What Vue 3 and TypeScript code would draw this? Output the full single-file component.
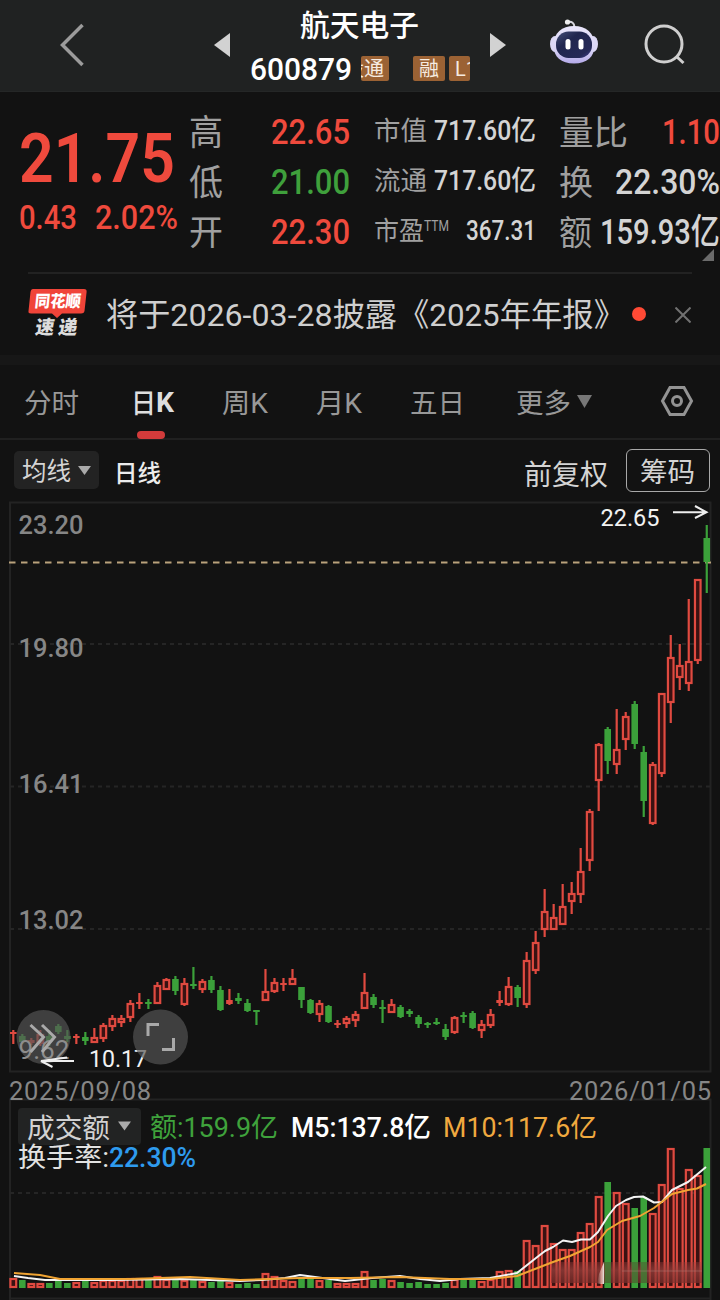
<script setup lang="ts">
import { h } from 'vue'

interface FitProps { t: string; w: number; s: number; h: number; b: number; wt?: number }

/* Single line of text fitted to a fixed advance width, on baseline b. */
const Fit = (p: FitProps) =>
  h('svg', { width: p.w, height: p.h, style: 'display:block;overflow:visible;flex:none' }, [
    h('text', {
      x: 0, y: p.b, 'font-size': p.s, 'font-weight': p.wt ?? 400,
      textLength: p.w, lengthAdjust: 'spacingAndGlyphs', fill: 'currentColor',
    }, p.t),
  ])
Fit.props = ['t', 'w', 's', 'h', 'b', 'wt']

const STEP = 9.006
const xAt = (i: number) => +(13.3 + STEP * i).toFixed(2)

/* direction, high, body top, body bottom, low, turnover bar top */
type Row = [string, number, number, number, number, number]
const rows: Row[] = [
  ['r', 1030, 1032, 1034, 1044, 1278], ['g', 1034, 1036, 1042, 1044, 1280], ['r', 1038, 1040, 1043, 1045, 1283],
  ['r', 1030, 1034, 1044, 1046, 1283], ['g', 1030, 1036, 1042, 1046, 1283], ['g', 1024, 1026, 1032, 1034, 1280],
  ['g', 1030, 1036, 1039, 1042, 1283], ['r', 1034, 1036, 1038, 1044, 1282], ['g', 1032, 1037, 1041, 1045, 1280],
  ['r', 1028, 1037, 1043, 1043, 1282], ['r', 1023, 1025, 1039, 1042, 1280], ['r', 1015, 1018, 1027, 1031, 1280],
  ['r', 1015, 1018, 1023, 1027, 1280], ['r', 1000, 1003, 1018, 1022, 1278], ['r', 993, 1002, 1004, 1009, 1278],
  ['g', 999, 1002, 1004, 1009, 1280], ['r', 982, 985, 1004, 1004, 1276], ['r', 978, 979, 990, 990, 1279],
  ['g', 976, 979, 991, 995, 1279], ['r', 978, 983, 1005, 1006, 1280], ['g', 967, 984, 986, 989, 1279],
  ['r', 979, 981, 990, 993, 1281], ['g', 976, 980, 990, 993, 1282], ['g', 986, 990, 1010, 1011, 1280],
  ['r', 989, 1000, 1004, 1005, 1282], ['g', 993, 998, 1001, 1004, 1284], ['g', 999, 1003, 1011, 1012, 1283],
  ['g', 1010, 1010, 1012, 1025, 1284], ['r', 969, 991, 1001, 1001, 1273], ['r', 978, 982, 992, 993, 1276],
  ['r', 978, 983, 985, 991, 1280], ['r', 969, 978, 985, 985, 1281], ['g', 987, 987, 1000, 1008, 1278],
  ['g', 999, 1000, 1013, 1014, 1279], ['r', 1000, 1003, 1015, 1022, 1280], ['g', 1005, 1006, 1022, 1023, 1280],
  ['r', 1020, 1023, 1025, 1028, 1283], ['r', 1016, 1018, 1024, 1028, 1283], ['r', 1011, 1014, 1021, 1027, 1283],
  ['r', 973, 992, 1009, 1009, 1271], ['g', 994, 997, 1005, 1008, 1280], ['g', 1000, 1007, 1009, 1023, 1279],
  ['r', 999, 1004, 1013, 1013, 1280], ['g', 1005, 1007, 1017, 1018, 1282], ['g', 1009, 1011, 1014, 1017, 1283],
  ['g', 1015, 1017, 1024, 1028, 1282], ['g', 1022, 1023, 1025, 1028, 1284], ['g', 1018, 1022, 1024, 1025, 1284],
  ['g', 1024, 1029, 1037, 1040, 1283], ['r', 1016, 1017, 1033, 1034, 1279], ['g', 1012, 1015, 1017, 1023, 1280],
  ['g', 1011, 1013, 1028, 1029, 1280], ['r', 1020, 1024, 1031, 1038, 1281], ['r', 1009, 1014, 1026, 1028, 1279],
  ['r', 991, 1000, 1003, 1006, 1271], ['r', 977, 986, 1005, 1006, 1270], ['g', 985, 987, 998, 1007, 1271],
  ['r', 952, 960, 1005, 1008, 1240], ['r', 931, 942, 971, 974, 1245], ['r', 889, 911, 930, 937, 1225],
  ['r', 904, 917, 930, 930, 1243], ['r', 884, 906, 925, 925, 1249], ['r', 882, 893, 902, 914, 1249],
  ['r', 848, 871, 895, 903, 1232], ['r', 809, 811, 861, 871, 1223], ['r', 743, 744, 781, 811, 1196],
  ['g', 727, 729, 761, 774, 1182], ['r', 709, 749, 765, 774, 1192], ['r', 712, 716, 740, 750, 1203],
  ['g', 701, 704, 744, 749, 1208], ['g', 746, 752, 801, 817, 1197], ['r', 762, 764, 824, 825, 1213],
  ['r', 693, 693, 774, 777, 1184], ['r', 635, 657, 703, 723, 1148], ['r', 644, 665, 678, 690, 1188],
  ['r', 599, 661, 684, 691, 1169], ['r', 579, 579, 661, 664, 1175], ['g', 525, 538, 562, 593, 1148],
]
const candles = rows.map(([c, hi, top, bot, lo, vol], i) => {
  const x = xAt(i)
  const hollow = c === 'r' && bot - top > 4
  return { x, hollow, cls: c === 'r' ? 'up' : 'down', red: c === 'r', hi, top, bot, lo, vol }
})

const ma5 = '14,1276 28,1278 45,1280 110,1280 180,1279 240,1281 262,1280 285,1278 300,1275 330,1279 345,1281 372,1278 400,1276 420,1279 440,1281 460,1279 490,1278 517,1273 536,1258 545,1251 553,1247 563,1240.5 572,1242 581,1239.5 590,1239.5 598,1232 608,1216 616,1206 626,1200 634,1197 643,1196.500 654,1202.5 662,1202 672,1190 688,1182 706,1167'
const ma10 = '14,1273 40,1275 60,1279 130,1279 190,1277 240,1280 300,1278 350,1278 400,1277 450,1279 490,1279 517,1276 535,1269 553,1262 570,1256 590,1247 598,1242 607,1230 622,1221 640,1216 654,1208 672,1194 688,1190 697,1188.500 706,1184'

const axis = [
  { t: '23.20', y: 534, w: 65 }, { t: '19.80', y: 657, w: 65 }, { t: '16.41', y: 793, w: 65 },
  { t: '13.02', y: 929, w: 65 },
]
const ohlc = [
  { k: '高', v: '22.65', c: 'red' }, { k: '低', v: '21.00', c: 'green' }, { k: '开', v: '22.30', c: 'red' },
]
const caps = [
  { k: '市值', v: '717.60亿', w: 102 }, { k: '流通', v: '717.60亿', w: 102 }, { k: '市盈', sup: 'TTM', v: '367.31', w: 70 },
]
const flows = [
  { k: '量比', kw: 69, v: '1.10', w: 58, c: 'red' }, { k: '换', kw: 34, v: '22.30%', w: 105, c: '' },
  { k: '额', kw: 33, v: '159.93亿', w: 120, c: '' },
]
</script>

<template>
  <div class="app">
    <header class="top">
      <svg class="back" width="24" height="44" viewBox="0 0 24 44"><path d="M22.500 2 2.500 22 22.500 42" /></svg>
      <svg class="tri prev" width="17" height="24" viewBox="0 0 17 24"><path d="M16 0V24L0 12Z" /></svg>
      <div class="stock">
        <Fit class="name" t="航天电子" :w="119" :s="30" :h="46" :b="36" :wt="500" />
        <div class="code">
          <Fit t="600879" :w="102" :s="31" :h="46" :b="34" :wt="500" />
          <div class="tags">
            <span class="tag cut"><Fit t="股通" :w="40" :s="20" :h="25" :b="20" /></span>
            <span class="tag mid"><Fit t="融" :w="20" :s="20" :h="25" :b="20" /></span>
            <span class="tag last"><Fit t="L1" :w="22" :s="20" :h="25" :b="20" /></span>
          </div>
        </div>
      </div>
      <svg class="tri next" width="17" height="24" viewBox="0 0 17 24"><path d="M0 0V24L16 12Z" /></svg>
      <svg class="robot" width="50" height="46" viewBox="0 0 50 46">
        <defs>
          <linearGradient id="shell" x1="0" y1="0" x2="0" y2="1"><stop offset="0" stop-color="#e9e6fb" /><stop offset=".65" stop-color="#d8d3f6" /><stop offset="1" stop-color="#b3a9e8" /></linearGradient>
          <linearGradient id="visor" x1="0" y1="0" x2="1" y2="1"><stop offset="0" stop-color="#46507a" /><stop offset=".35" stop-color="#20264f" /><stop offset=".8" stop-color="#252957" /><stop offset="1" stop-color="#46449a" /></linearGradient>
        </defs>
        <path d="M18 4Q24 3 24.500 9" fill="none" stroke="#d6d6de" stroke-width="2" />
        <circle cx="17.500" cy="4" r="2.600" fill="#eee" />
        <ellipse cx="5" cy="26" rx="5" ry="8" fill="#dcd8f6" />
        <ellipse cx="43" cy="26" rx="5" ry="8" fill="#dcd8f6" />
        <path d="M24 8C36 8 44.500 15 44.500 27 44.500 39 37 45.500 24 45.500S3.500 39 3.500 27C3.500 15 12 8 24 8Z" fill="url(#shell)" />
        <rect x="6" y="13.500" width="36" height="26.500" rx="12.500" fill="url(#visor)" />
        <rect x="15.500" y="21" width="5" height="10.500" rx="2.500" fill="#fff" />
        <rect x="28.500" y="21" width="5" height="10.500" rx="2.500" fill="#fff" />
      </svg>
      <svg class="search" width="42" height="42" viewBox="0 0 42 42"><circle cx="20" cy="20" r="18" /><path d="M32.500 32.500 39.500 39" /></svg>
    </header>

    <section class="quote">
      <div class="price">
        <Fit class="red" t="21.75" :w="156" :s="69" :h="98" :b="90" :wt="600" />
        <div class="chg red">
          <Fit t="0.43" :w="58" :s="33" :h="50" :b="39" :wt="500" />
          <Fit t="2.02%" :w="83" :s="33" :h="50" :b="39" :wt="500" />
        </div>
      </div>
      <div class="col c2">
        <div v-for="r in ohlc" :key="r.k" class="cell">
          <Fit class="lab" :t="r.k" :w="34" :s="35" :h="50" :b="39" />
          <Fit :class="r.c" :t="r.v" :w="79" :s="35" :h="50" :b="38" :wt="500" />
        </div>
      </div>
      <div class="col c3">
        <div v-for="r in caps" :key="r.k" class="cell">
          <span class="labs">
            <Fit class="lab" :t="r.k" :w="r.sup ? 50 : 53" :s="26" :h="50" :b="34" />
            <Fit v-if="r.sup" class="lab" :t="r.sup" :w="25" :s="14.500" :h="50" :b="25" />
          </span>
          <Fit :t="r.v" :w="r.w" :s="27" :h="50" :b="34" :wt="500" />
        </div>
      </div>
      <div class="col c4">
        <div v-for="r in flows" :key="r.k" class="cell">
          <Fit class="lab" :t="r.k" :w="r.kw" :s="34" :h="50" :b="39" />
          <Fit :class="r.c" :t="r.v" :w="r.w" :s="35" :h="50" :b="38" :wt="500" />
        </div>
      </div>
      <svg class="corner" width="12" height="12" viewBox="0 0 12 12"><path d="M12 0V12H0Z" /></svg>
    </section>

    <section class="news">
      <svg class="logo" width="60" height="52" viewBox="0 0 60 52">
        <path d="M5 2H56Q59 2 58.600 5L56.500 24Q56 26.500 53 26.500H34L29 31 24 26.500H3Q0 26.500 .5 24L2.500 5Q3 2 5 2Z" fill="#f04439" />
        <text x="8.500" y="20.500" font-size="16.500" font-weight="900" fill="#fff" textLength="46" lengthAdjust="spacingAndGlyphs" transform="skewX(-6)">同花顺</text>
        <text x="14" y="47" font-size="19" font-weight="900" fill="#ddd" textLength="19" lengthAdjust="spacingAndGlyphs" transform="skewX(-9)">速</text>
        <text x="37" y="47" font-size="19" font-weight="900" fill="#ddd" textLength="19" lengthAdjust="spacingAndGlyphs" transform="skewX(-9)">递</text>
      </svg>
      <Fit class="headline" t="将于2026-03-28披露" :w="291" :s="32" :h="80" :b="52" />
      <Fit class="title" t="《2025年年报》" :w="227" :s="32" :h="80" :b="52" />
      <i class="dot"></i>
      <svg class="close" width="16" height="16" viewBox="0 0 16 16"><path d="M.5.5 15.500 15.500M15.500.5.5 15.500" /></svg>
    </section>

    <nav class="tabs">
      <Fit class="t1" t="分时" :w="55" :s="27" :h="73" :b="48" />
      <span class="t2 on"><Fit t="日" :w="25" :s="27" :h="73" :b="48" :wt="500" /><Fit t="K" :w="18" :s="27" :h="73" :b="47" :wt="700" /></span>
      <Fit class="t3" t="周K" :w="46" :s="27" :h="73" :b="48" />
      <Fit class="t4" t="月K" :w="46" :s="27" :h="73" :b="48" />
      <Fit class="t5" t="五日" :w="55" :s="27" :h="73" :b="48" />
      <Fit class="t6" t="更多" :w="55" :s="27" :h="73" :b="48" />
      <svg class="t7" width="15" height="13" viewBox="0 0 15 13"><path d="M0 0H15L7.500 13Z" fill="#777" /></svg>
      <svg class="t8" width="34" height="32" viewBox="0 0 34 32"><path d="M10 2.500H24L31.500 16 24 29.500H10L2.500 16Z" /><circle cx="17" cy="16" r="4.500" /></svg>
    </nav>

    <div class="bar">
      <span class="pick">
        <Fit t="均线" :w="49" :s="24.500" :h="38" :b="29" />
        <svg width="13" height="9" viewBox="0 0 13 9"><path d="M0 0H13L6.500 9Z" fill="#aaa" /></svg>
      </span>
      <Fit class="daily" t="日线" :w="47" :s="24" :h="38" :b="30" :wt="500" />
      <Fit class="adj" t="前复权" :w="84" :s="28" :h="38" :b="33" />
      <span class="chips"><Fit t="筹码" :w="55" :s="27.500" :h="40" :b="32" /></span>
    </div>

    <svg class="chart" width="720" height="803" viewBox="0 497 720 803">
      <defs>
        <linearGradient id="smear" x1="0" y1="0" x2="0" y2="1">
          <stop offset="0" stop-color="#a33f3c" stop-opacity=".35" /><stop offset=".4" stop-color="#9a403c" stop-opacity=".75" /><stop offset="1" stop-color="#7c2f2c" stop-opacity=".7" />
        </linearGradient>
        <linearGradient id="streak" x1="0" y1="0" x2="1" y2="0">
          <stop offset="0" stop-color="#e9c9c0" stop-opacity="0" /><stop offset=".8" stop-color="#ecd6cd" stop-opacity=".8" /><stop offset="1" stop-color="#fff" stop-opacity=".9" />
        </linearGradient>
      </defs>
      <g class="frame">
        <path d="M10 1071.500V502.500H710.500V1071.500Z" />
        <path d="M10 1300V1099.500H710.500V1300M10 1298.500H710.500" />
      </g>
      <path class="dash" d="M10 644H710M10 786.500H710M10 929H710M10 1193H710" />
      <g class="lab2">
        <text v-for="a in axis" :key="a.t" x="18.500" :y="a.y" font-size="25" :textLength="a.w" lengthAdjust="spacingAndGlyphs" font-weight="500">{{ a.t }}</text>
        <text x="9" y="1100" font-size="25.500" textLength="142" lengthAdjust="spacing">2025/09/08</text>
        <text x="569" y="1100" font-size="25.500" textLength="142" lengthAdjust="spacing">2026/01/05</text>
      </g>
      <path class="last" d="M9 562.500H711" />
      <g v-for="(c, i) in candles" :key="i" :class="c.cls">
        <template v-if="c.hollow">
          <path :d="`M${c.x} ${c.hi}V${c.top}M${c.x} ${c.bot}V${c.lo}`" class="wick" />
          <rect :x="c.x - 2.800" :y="c.top + 1" width="5.600" :height="c.bot - c.top - 2" class="hollow" />
        </template>
        <template v-else>
          <path :d="`M${c.x} ${c.hi}V${c.lo}`" class="wick" />
          <rect :x="c.x - 3.300" :y="c.top" width="6.600" :height="c.bot - c.top" class="solid" />
        </template>
        <rect v-if="c.red" :x="c.x - 2.900" :y="c.vol + 1" width="5.800" :height="1286 - c.vol" class="hollow" />
        <rect v-else :x="c.x - 3.300" :y="c.vol" width="6.600" :height="1288 - c.vol" class="solid" />
      </g>
      <rect x="551" y="1262" width="151" height="21" fill="url(#smear)" />
      <path d="M607.800 1262V1283M634.900 1262V1283M643.900 1262V1283" stroke="#3b7a33" stroke-width="6" opacity=".75" />
      <path d="M622 1271H702" stroke="#b98a84" opacity=".4" />
      <path d="M597 1284 599 1274 604 1262V1284Z" fill="url(#streak)" />
      <polyline class="ma" stroke="#f4f4f4" :points="ma5" />
      <polyline class="ma" stroke="#f0a433" :points="ma10" />

      <circle cx="43.500" cy="1037" r="27" class="pad" />
      <text x="89" y="1067" font-size="23" textLength="58" lengthAdjust="spacingAndGlyphs" fill="#f2f2f2">10.17</text>
      <circle cx="160.500" cy="1037" r="27.500" class="pad" />
      <text x="18.500" y="1059" font-size="25" textLength="51" lengthAdjust="spacingAndGlyphs" fill="#8d8d8d">9.62</text>
      <path class="glyph" d="M30.500 1025 43.500 1037 30.500 1052M42 1025 54.500 1037 42 1052" />
      <path class="glyph" d="M148 1036V1024.500H159M162 1049.500H173.500V1038" />
      <text x="600.500" y="526" font-size="23" textLength="59" lengthAdjust="spacingAndGlyphs" fill="#f2f2f2">22.65</text>
      <path class="arrow" d="M673 512.300H706M695 506 706.500 512.300 695 518" />
      <path class="arrow" d="M74 1061H41L52.500 1067M41 1061 67 1057.500" stroke="#bbb" />

      <rect x="18" y="1108" width="123" height="37" rx="4" fill="#222323" />
      <g class="legend">
        <text x="27" y="1138" textLength="83" lengthAdjust="spacingAndGlyphs" fill="#d2d2d2">成交额</text>
        <path d="M118 1121.500H131L124.500 1130.500Z" fill="#aaa" />
        <text x="150" y="1137" textLength="128" lengthAdjust="spacingAndGlyphs" fill="#3fa23c">额:159.9亿</text>
        <text x="291" y="1137" textLength="140" lengthAdjust="spacingAndGlyphs" fill="#fff" font-weight="500">M5:137.8亿</text>
        <text x="443" y="1137" textLength="154" lengthAdjust="spacingAndGlyphs" fill="#f0a93f">M10:117.6亿</text>
        <text x="18" y="1167" textLength="91" lengthAdjust="spacingAndGlyphs" fill="#e2e2e2">换手率:</text>
        <text x="109" y="1167" textLength="87" lengthAdjust="spacingAndGlyphs" fill="#2e9bee" font-weight="500">22.30%</text>
      </g>
    </svg>
  </div>
</template>

<style>
body { background: #121212; }
</style>

<style scoped>
.app { width: 720px; height: 1300px; overflow: hidden; background: #121212; color: #d4d4d4; font-family: Roboto, "Noto Sans CJK SC", sans-serif; }
.red { color: #ef4a3d; }
.green { color: #3fa03c; }
.lab { color: #a0a0a0; }

.top { box-sizing: border-box; display: flex; align-items: flex-start; height: 92px; background: #202222; border-bottom: 1px solid #252727; }
.back { margin: 23px 0 0 60px; fill: none; stroke: #9b9b9b; stroke-width: 3.500; }
.tri { fill: #d2d2d2; margin-top: 33px; }
.prev { margin-left: 130px; }
.stock { width: 221px; margin-left: 18px; color: #fff; }
.name { margin-left: 51px; }
.code { display: flex; margin-left: 1px; }
.tags { display: flex; margin: 10px 0 0 9px; width: 109px; overflow: hidden; }
.tag { flex: none; box-sizing: border-box; display: flex; height: 25px; border-radius: 2px; background: #9b6234; color: #f6ebe0; overflow: hidden; }
.cut { width: 28px; padding-right: 5px; justify-content: flex-end; }
.mid { width: 32px; margin-left: 24px; padding-left: 6px; }
.tag.last { width: 21px; margin-left: 4px; padding-left: 6px; }
.next { margin-left: 20px; }
.robot { margin: 18px 0 0 43px; }
.search { margin: 24px 0 0 44px; fill: none; stroke: #cfcfcf; stroke-width: 3; }

.quote { position: relative; display: flex; height: 180px; box-sizing: border-box; }
.price { width: 170px; margin-left: 19px; }
.chg { display: flex; gap: 18px; }
.col { padding-top: 14px; }
.cell { display: flex; justify-content: space-between; height: 50px; }
.c2 { width: 161px; }
.c3 { width: 162px; margin-left: 24px; }
.c4 { width: 161px; margin-left: 23px; }
.labs { display: flex; }
.corner { position: absolute; left: 702px; top: 157px; fill: #6b6b6b; }

.news { position: relative; display: flex; align-items: flex-start; box-sizing: border-box; height: 93px; border-bottom: 10px solid #171717; }
.news::before { content: ""; position: absolute; left: 28px; top: 0; width: 664px; height: 2px; background: #222; }
.logo { margin: 15px 0 0 28px; }
.headline { margin: 2px 0 0 18px; color: #cfcfcf; }
.title { margin: 2px 0 0 1px; color: #cfcfcf; }
.dot { width: 14px; height: 14px; margin: 35px 0 0 7px; border-radius: 50%; background: #ff4a35; }
.close { margin: 35px 0 0 29px; stroke: #717171; stroke-width: 2; fill: none; }

.tabs { display: flex; align-items: flex-start; box-sizing: border-box; height: 75px; border-bottom: 2px solid #202020; color: #989898; }
.t1 { margin-left: 24px; }
.t2 { position: relative; display: flex; margin-left: 52px; }
.on { color: #dedede; }
.on::after { content: ""; position: absolute; left: 6px; top: 66px; width: 28px; height: 8px; border-radius: 4px; background: #d23b3b; }
.t3 { margin-left: 48px; }
.t4 { margin-left: 48px; }
.t5 { margin-left: 48px; }
.t6 { margin-left: 51px; }
.t7 { margin: 30px 0 0 6px; }
.t8 { margin: 20px 0 0 68px; fill: none; stroke: #939393; stroke-width: 3; }

.bar { display: flex; align-items: flex-start; height: 57px; }
.pick { display: flex; align-items: center; box-sizing: border-box; width: 85px; height: 38px; margin: 11px 0 0 14px; padding-left: 8px; gap: 7px; border-radius: 5px; background: #232323; }
.daily { margin: 12px 0 0 15px; color: #ececec; }
.adj { margin: 12px 0 0 363px; }
.chips { box-sizing: border-box; width: 84px; height: 43px; margin: 9px 0 0 18px; padding-left: 13px; border: 1.5px solid #a8a8a8; border-radius: 6px; }

.chart { display: block; }
.frame { fill: none; stroke: #232323; stroke-width: 2; }
.dash { fill: none; stroke: #252525; stroke-width: 2; stroke-dasharray: 4 4; }
path.last { fill: none; stroke: #b9a27c; stroke-width: 2; stroke-dasharray: 6.500 5.500; }
.lab2 { fill: #868686; }
.up { stroke: #e04a40; fill: #e04a40; }
.down { stroke: #3ba13a; fill: #3ba13a; }
.wick { stroke-width: 2.200; }
.hollow { fill: #3a1212; stroke-width: 2.200; }
.solid { stroke: none; }
.ma { fill: none; stroke-width: 2; stroke-linejoin: round; }
.pad { fill: #555; fill-opacity: .68; }
.glyph { fill: none; stroke: #a9a9a9; stroke-width: 3; }
.arrow { fill: none; stroke: #eee; stroke-width: 2; }
.legend { font-size: 27.500px; }
</style>
